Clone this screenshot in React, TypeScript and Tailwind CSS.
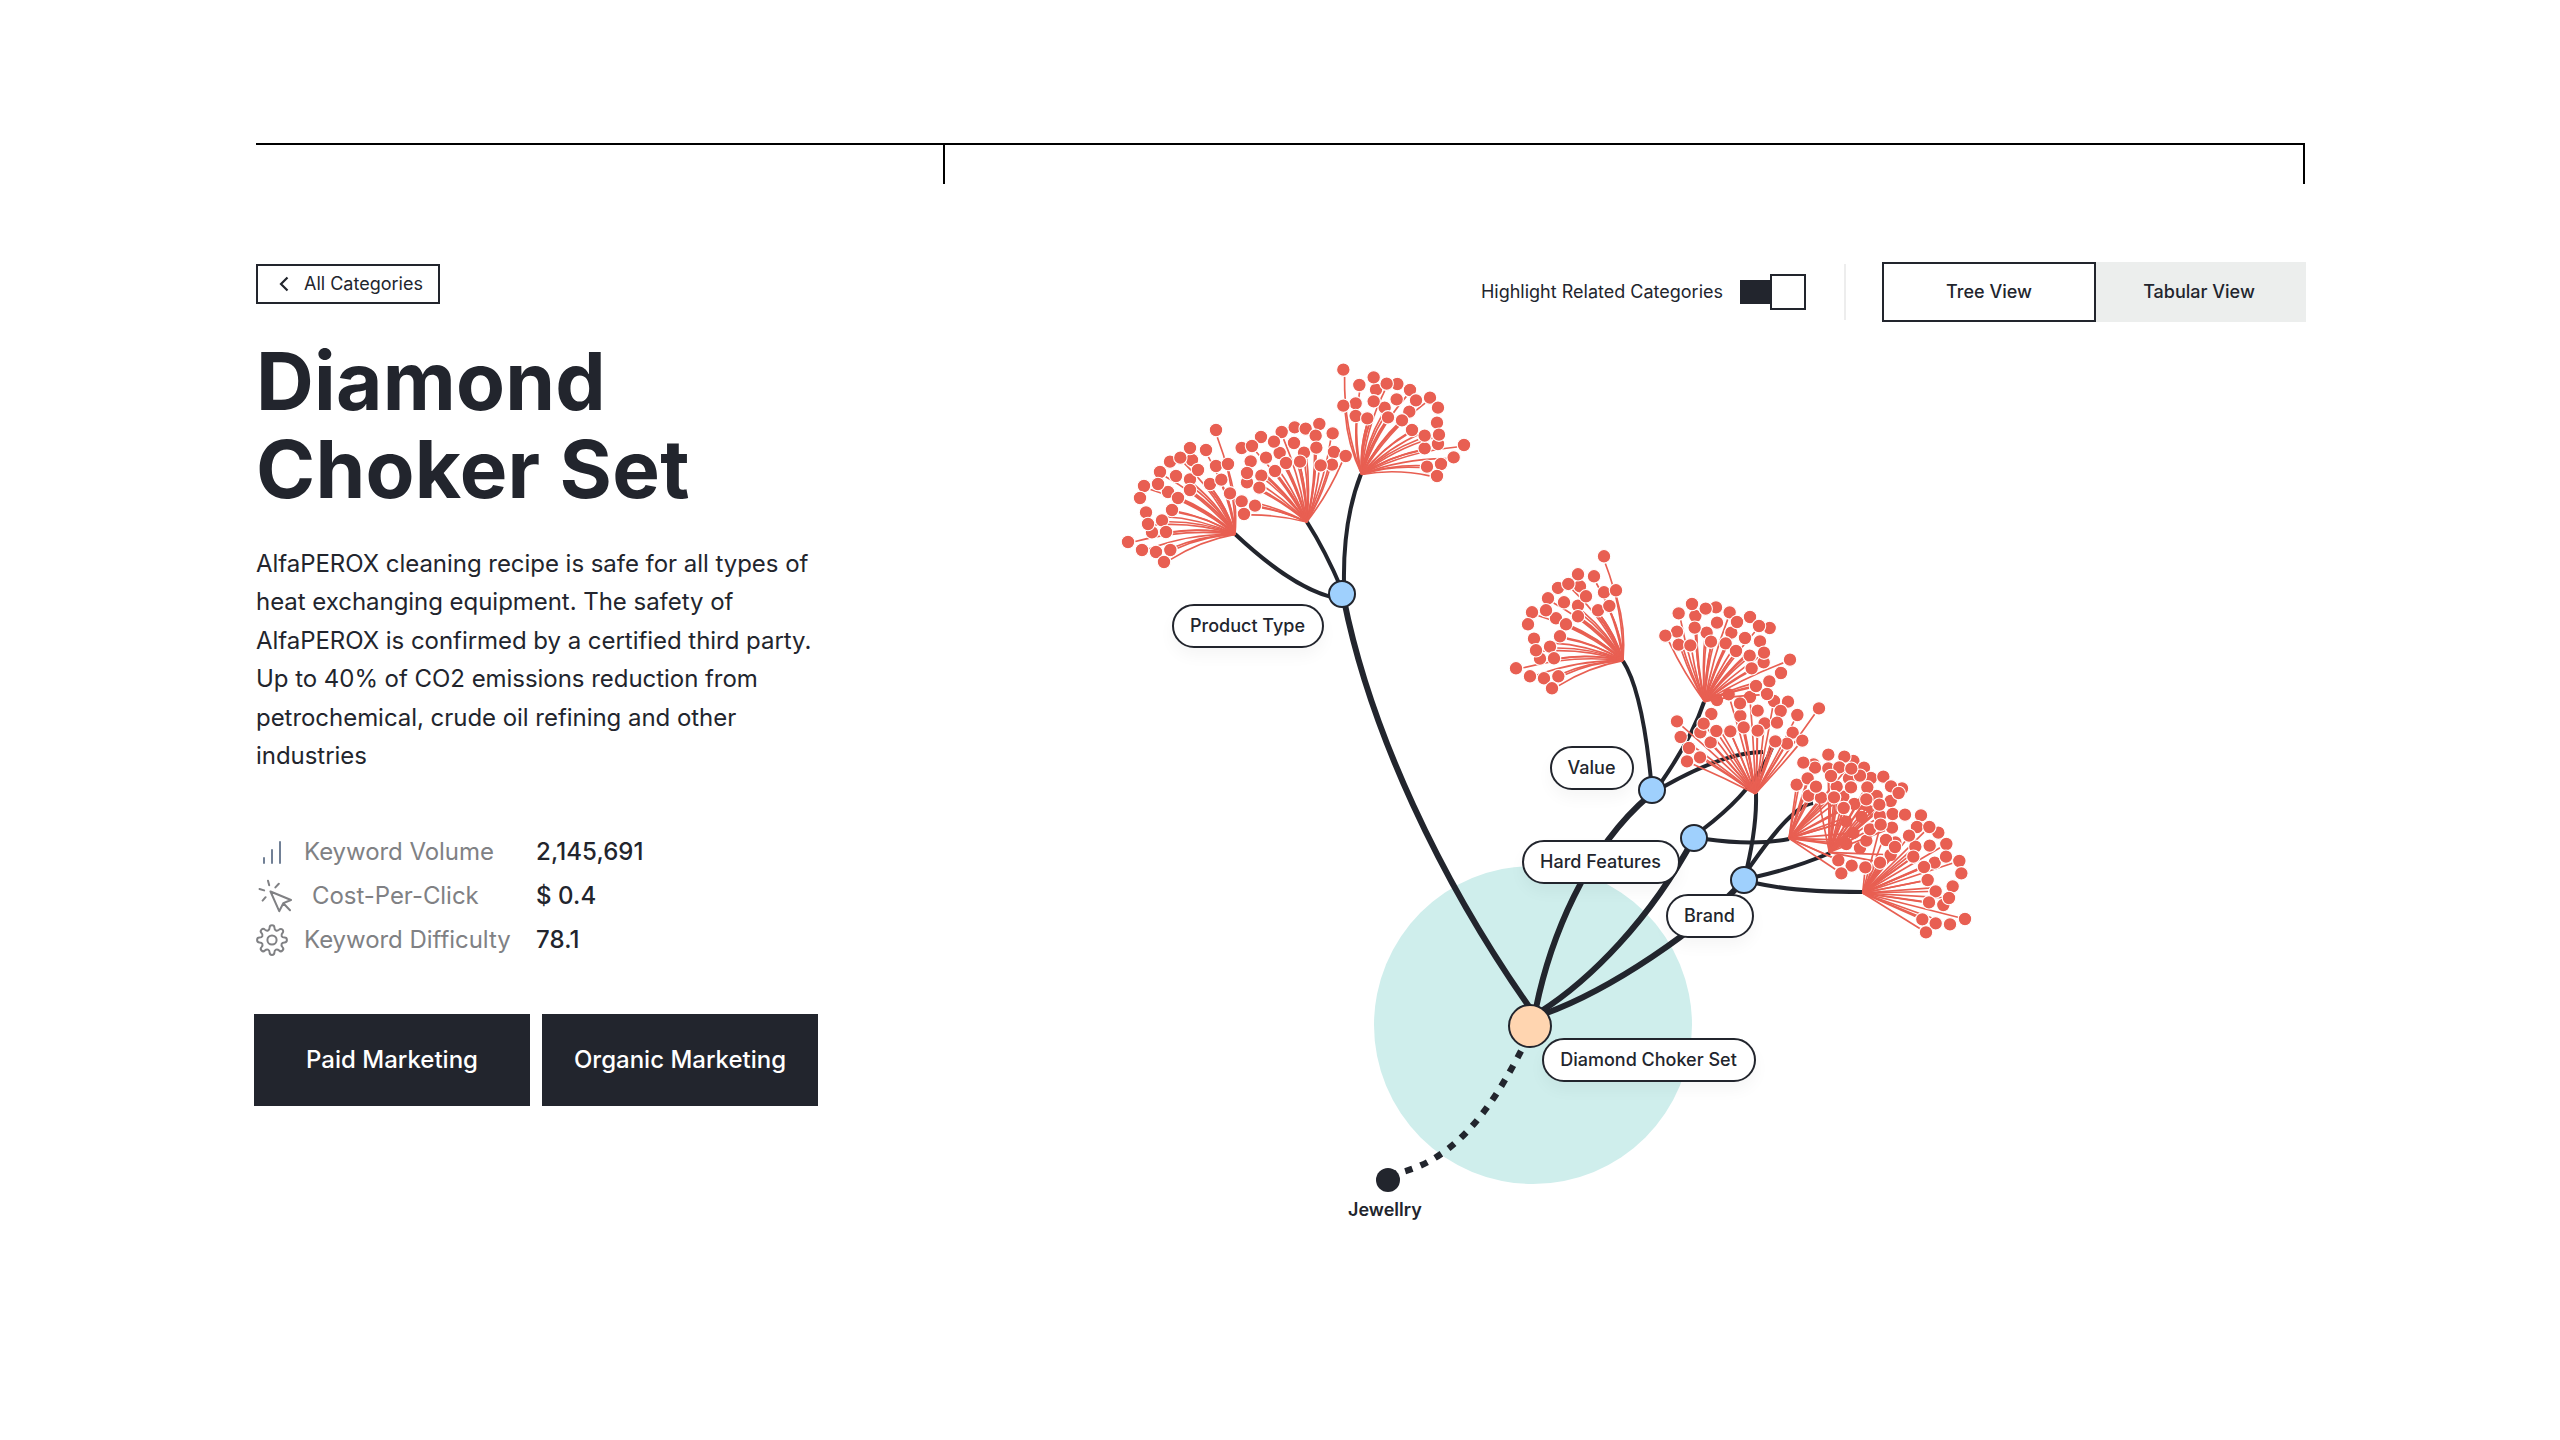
import React from "react";

type Point = [number, number];

interface Cluster {
  origin: Point;
  apex: Point;
  bow: number;
  back: Point[];
  front: Point[];
}

/* Cluster points are stored in thirds of a canvas pixel, relative to `origin`. */
const fanBack: Point[] = [[126, 547], [174, 426], [240, 388], [318, 348], [180, 335], [300, 402], [138, 606], [246, 330]];
const fanFront: Point[] = [
  [240, 294], [288, 300], [318, 240], [211, 323], [150, 366], [198, 378], [264, 360], [354, 342], [102, 408], [144, 402],
  [334, 389], [240, 420], [204, 444], [90, 444], [108, 487], [186, 480], [156, 511], [114, 522], [168, 546],
  [54, 576], [96, 600], [181, 600], [162, 636],
];

const clusters: Cluster[] = [
  { origin: [1110, 350], apex: [375, 553], bow: 0.06, back: fanBack, front: fanFront },
  {
    origin: [1110, 350],
    apex: [590, 516],
    bow: 0.04,
    back: [[395, 294], [582, 308], [509, 309], [672, 306], [666, 344], [422, 334], [411, 397], [554, 232], [395, 454]],
    front: [
      [628, 222], [668, 250], [587, 236], [617, 257], [515, 246], [453, 261], [492, 275], [552, 279], [426, 288], [619, 293],
      [707, 318], [468, 323], [570, 335], [528, 339], [632, 346], [495, 363], [411, 369], [454, 377], [448, 413],
      [360, 430], [435, 467], [402, 492],
    ],
  },
  {
    origin: [1110, 350],
    apex: [755, 373],
    bow: -0.06,
    back: [[862, 102], [824, 173], [898, 185], [737, 160], [984, 282]],
    front: [
      [700, 59], [748, 105], [798, 119], [791, 82], [830, 101], [900, 120], [860, 148], [918, 151], [960, 143], [984, 173],
      [700, 167], [791, 154], [737, 198], [772, 205], [834, 202], [876, 211], [906, 240], [981, 218], [987, 254],
      [944, 295], [944, 257], [1062, 285], [1031, 322], [993, 342], [951, 350], [981, 378],
    ],
  },
  { origin: [1498, 476.3], apex: [375, 553], bow: 0.06, back: fanBack, front: fanFront },
  {
    origin: [1650, 580],
    apex: [316, 641],
    bow: 0.01,
    back: [[300, 351], [201, 360], [236, 343], [271, 408], [344, 430], [151, 457], [372, 363]],
    front: [
      [270, 370], [323, 392], [184, 402], [161, 431], [81, 424], [92, 471], [182, 487], [199, 453], [241, 454], [281, 442],
      [323, 452], [414, 365], [392, 393], [442, 405], [381, 428], [428, 458], [411, 491], [376, 484], [457, 482],
      [507, 385], [117, 504], [150, 532], [111, 544],
    ],
  },
  {
    origin: [1650, 580],
    apex: [164, 365],
    bow: -0.03,
    back: [[198, 82], [359, 144], [81, 155], [170, 158], [244, 158], [341, 247], [86, 194]],
    front: [
      [86, 100], [136, 108], [126, 72], [167, 86], [239, 97], [201, 128], [261, 126], [300, 111], [327, 138], [46, 167],
      [134, 143], [285, 174], [330, 184], [121, 196], [183, 185], [227, 190], [258, 213], [342, 218], [299, 227],
      [305, 265], [420, 239], [393, 279], [358, 304], [318, 318], [351, 342],
    ],
  },
  {
    origin: [1770, 735],
    apex: [57, 310],
    bow: 0,
    back: [[131, 88], [250, 78], [237, 130], [220, 185], [116, 182], [153, 188], [290, 225]],
    front: [
      [135, 98], [100, 83], [80, 149], [113, 130], [200, 155], [138, 155], [253, 207], [192, 187], [221, 219], [275, 246],
      [229, 260], [270, 339], [250, 294], [289, 317], [229, 327], [245, 392], [205, 376], [214, 415],
    ],
  },
  {
    origin: [1770, 735],
    apex: [178, 352],
    bow: 0,
    back: [[175, 100], [282, 98], [303, 129], [320, 183], [396, 160], [362, 198], [330, 243], [300, 283], [332, 382], [362, 360]],
    front: [
      [175, 59], [223, 65], [208, 97], [270, 122], [244, 101], [183, 123], [243, 157], [292, 157], [340, 125], [363, 154],
      [386, 174], [138, 155], [289, 193], [328, 209], [192, 187], [221, 219], [366, 278],
    ],
  },
  {
    origin: [1770, 735],
    apex: [278, 474],
    bow: 0,
    back: [[286, 397], [330, 383], [368, 237], [376, 322], [436, 335], [520, 510], [494, 383], [505, 293]],
    front: [
      [332, 269], [348, 315], [375, 336], [405, 239], [453, 241], [441, 276], [478, 276], [417, 302], [479, 332], [529, 327],
      [528, 365], [430, 365], [462, 396], [568, 378], [574, 415], [473, 435], [548, 454], [497, 469], [537, 489],
      [477, 502], [585, 552], [497, 565], [540, 568], [457, 553], [468, 592],
    ],
  },
];

const trunks = [
  "M1344 600C1370 730 1440 880 1530 1008",
  "M1536 1008C1550 940 1585 850 1650 795",
  "M1540 1012C1590 980 1650 920 1694 838",
  "M1544 1014C1610 990 1700 930 1744 880",
];

const branches = [
  "M1235 534C1265 562 1300 590 1335 598",
  "M1307 522Q1325 550 1342 590",
  "M1361 474Q1343 520 1344 582",
  "M1623 661Q1642 690 1651 780",
  "M1704 702Q1692 738 1660 784",
  "M1663 787Q1725 752 1763 752",
  "M1702 830Q1755 790 1772 748",
  "M1705 839Q1755 846 1789 839",
  "M1747 868Q1757 825 1756 793",
  "M1749 868C1770 838 1794 806 1813 803",
  "M1755 877Q1795 868 1830 853",
  "M1755 883Q1795 892 1862 892",
];

const nodes: Point[] = [[1342, 594], [1652, 790], [1694, 838], [1744, 880]];

/* A stem runs from the apex towards its dot and stops at a dot in its way, unless its own dot stands alone. */
function stem([ax, ay]: Point, [x, y]: Point, bow: number, dots: Point[]) {
  const length = Math.hypot(x - ax, y - ay);
  const ux = (x - ax) / length;
  const uy = (y - ay) / length;
  let reach = length - 22;
  const alone = dots.every(([px, py]) => (px === x && py === y) || Math.hypot(px - x, py - y) > 46);
  for (const [px, py] of dots) {
    const along = (px - ax) * ux + (py - ay) * uy;
    const aside = Math.abs((px - ax) * uy - (py - ay) * ux);
    if (!alone && along > 40 && aside < 12) reach = Math.min(reach, along);
  }
  const ex = ax + ux * reach;
  const ey = ay + uy * reach;
  const cx = (ax + ex) / 2 - (ey - ay) * bow * 1.6;
  const cy = (ay + ey) / 2 + (ex - ax) * bow * 1.6;
  return `M${ax} ${ay}Q${cx} ${cy} ${ex} ${ey}`;
}

function ClusterShape({ origin, apex, bow, back, front }: Cluster) {
  const dots = [...back, ...front];
  return (
    <g transform={`translate(${origin[0]} ${origin[1]}) scale(0.33333)`}>
      {dots.map((dot, i) => (
        <path key={i} d={stem(apex, dot, bow, dots)} fill="none" stroke="#e85f52" strokeWidth="5" />
      ))}
      {dots.map(([x, y], i) => (
        <circle key={i} cx={x} cy={y} r="20.2" fill="#e85f52" stroke="#fff" strokeWidth="3.2" />
      ))}
    </g>
  );
}

function NodeLabel({ className, children }: { className: string; children: React.ReactNode }) {
  return (
    <span
      className={`absolute flex h-11 items-center justify-center rounded-full border-2 border-[#22252d] bg-white pr-px text-lg font-medium whitespace-nowrap shadow-[0_8px_16px_rgba(0,0,0,0.04)] ${className}`}
    >
      {children}
    </span>
  );
}

function Tree() {
  return (
    <div className="relative h-[900px] w-[1000px]">
      <svg className="block h-full w-full" viewBox="1080 340 1000 900">
        <circle cx="1533" cy="1025" r="159" fill="#cfeeec" />
        <g fill="none" stroke="#22252d">
          {trunks.map((d) => <path key={d} d={d} strokeWidth="6" />)}
          {branches.map((d) => <path key={d} d={d} strokeWidth="4" />)}
          <path d="M1521 1051C1492 1107 1455 1162 1394 1174" strokeWidth="6.4" strokeDasharray="7.6 8.8" />
        </g>
        {clusters.map((c, i) => <ClusterShape key={i} {...c} />)}
        {nodes.map(([x, y]) => (
          <circle key={x} cx={x} cy={y} r="13" fill="#9fd0fd" stroke="#22252d" strokeWidth="2" />
        ))}
        <circle cx="1530" cy="1026" r="21" fill="#ffd5b0" stroke="#22252d" strokeWidth="2" />
        <circle cx="1388" cy="1180" r="12" fill="#22252d" />
      </svg>
      <NodeLabel className="top-[264px] left-[92px] w-[152px]">Product Type</NodeLabel>
      <NodeLabel className="top-[406px] left-[470px] w-[84px]">Value</NodeLabel>
      <NodeLabel className="top-[500px] left-[442px] w-[158px]">Hard Features</NodeLabel>
      <NodeLabel className="top-[554px] left-[586px] w-[88px]">Brand</NodeLabel>
      <NodeLabel className="top-[698px] left-[462px] w-[214px]">Diamond Choker Set</NodeLabel>
      <span className="absolute top-[856px] left-[268px] text-lg font-semibold">Jewellry</span>
    </div>
  );
}

function BarsIcon() {
  return (
    <svg className="h-8 w-8" viewBox="0 0 32 32" fill="none" stroke="#718096" strokeWidth="2" strokeLinecap="round">
      <path d="M8 22v5M16 14v13M24 6v21" />
    </svg>
  );
}

function ClickIcon() {
  return (
    <svg className="h-9 w-9" viewBox="0 0 36 36" fill="none" stroke="#808184" strokeWidth="2" strokeLinecap="round" strokeLinejoin="round">
      <path d="M14.5 13.5L35 22 27.3 25.2 23.2 33.2ZM27.3 25.2l6.7 7M12 2.8l1.2 4.4M3.5 11l4.6 1.4M22.8 5.8l-3.4 3.6M9.6 19.2l-3 3.4" />
    </svg>
  );
}

function GearIcon() {
  return (
    <svg className="h-8 w-8" viewBox="0 0 32 32" fill="none" stroke="#808184" strokeWidth="2" strokeLinejoin="round">
      <circle cx="16" cy="16" r="4.6" />
      <path d="M13.6 3.6a2.4 2.4 0 0 1 4.8 0c0 3 2.6 4 4.7 2a2.4 2.4 0 0 1 3.4 3.4c-2 2.1-1 4.6 2 4.6a2.4 2.4 0 0 1 0 4.8c-3 0-4 2.6-2 4.7a2.4 2.4 0 0 1-3.4 3.4c-2.1-2-4.7-1-4.7 2a2.4 2.4 0 0 1-4.8 0c0-3-2.6-4-4.7-2a2.4 2.4 0 0 1-3.4-3.4c2-2.1 1-4.7-2-4.7a2.4 2.4 0 0 1 0-4.8c3 0 4-2.5 2-4.6a2.4 2.4 0 0 1 3.4-3.4c2.1 2 4.7 1 4.7-2Z" />
    </svg>
  );
}

function Stat({ icon, label, value, labelClass }: { icon: React.ReactNode; label: string; value: string; labelClass: string }) {
  return (
    <div className="flex h-11 items-center text-2xl">
      <span className="w-[37px] shrink-0">{icon}</span>
      <span className={`shrink-0 tracking-[-0.05px] text-[#808184] ${labelClass}`}>{label}</span>
      <span className="font-medium tracking-[0.1px]">{value}</span>
    </div>
  );
}

export default function App() {
  return (
    <div className="h-[1440px] w-[2560px] overflow-hidden bg-white px-[256px] pt-[143px] font-['Inter',sans-serif] text-[#22252d]">
      <div className="flex h-[41px] w-[2049px] border-t-2 border-black">
        <div className="w-[689px] border-r-2 border-black" />
        <div className="flex-1 border-r-2 border-black" />
      </div>

      <main className="flex">
        <section className="w-[824px] shrink-0 pt-20">
          <button className="flex h-10 w-[184px] items-center border-2 border-[#22252d] pl-[20px] text-lg whitespace-nowrap">
            <svg className="mr-[14px] h-4 w-3 shrink-0" viewBox="0 0 12 16" fill="none" stroke="#22252d" strokeWidth="2.2">
              <path d="M9.5 1.5L3 8l6.5 6.5" />
            </svg>
            All Categories
          </button>
          <h1 className="mt-[33px] text-[80px] leading-[88px] font-bold tracking-[0.25px]">
            Diamond
            <br />
            Choker Set
          </h1>
          <p className="mt-[32px] w-[572px] text-2xl leading-[38.4px] tracking-[-0.04px]">
            AlfaPEROX cleaning recipe is safe for all types of
            <br />
            heat exchanging equipment. The safety of
            <br />
            AlfaPEROX is confirmed by a certified third party.
            <br />
            Up to 40% of CO2 emissions reduction from
            <br />
            petrochemical, crude oil refining and other
            <br />
            industries
          </p>
          <div className="mt-[55px]">
            <Stat icon={<BarsIcon />} label="Keyword Volume" value="2,145,691" labelClass="ml-[11px] w-[232px]" />
            <Stat icon={<ClickIcon />} label="Cost-Per-Click" value="$ 0.4" labelClass="ml-[19px] w-[224px]" />
            <Stat icon={<GearIcon />} label="Keyword Difficulty" value="78.1" labelClass="ml-[11px] w-[232px]" />
          </div>
          <div className="mt-[52px] -ml-0.5 flex gap-3">
            <button className="h-[92px] w-[276px] bg-[#22252d] text-2xl font-medium text-white">Paid Marketing</button>
            <button className="h-[92px] w-[276px] bg-[#22252d] text-2xl font-medium text-white">Organic Marketing</button>
          </div>
        </section>

        <section className="pt-[78px]">
          <div className="flex h-[60px] w-[1226px] items-center justify-end text-lg">
            <span>Highlight Related Categories</span>
            <span className="ml-[17px] flex items-center">
              <span className="h-6 w-[30px] bg-[#22252d]" />
              <span className="h-9 w-9 border-2 border-[#22252d] bg-white" />
            </span>
            <span className="ml-[38px] h-14 w-0.5 bg-[#ededed]" />
            <button className="ml-[36px] h-[60px] w-[214px] border-2 border-[#22252d] font-medium">Tree View</button>
            <button className="h-[60px] w-[210px] bg-[#eceeed] pr-1 font-medium">Tabular View</button>
          </div>
          <div className="pt-[18px]">
            <Tree />
          </div>
        </section>
      </main>
    </div>
  );
}
